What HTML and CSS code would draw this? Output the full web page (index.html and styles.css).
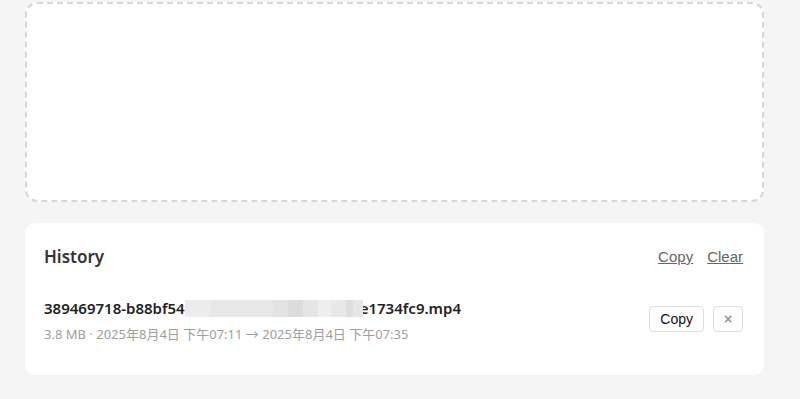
FILE: index.html
```html
<!DOCTYPE html>
<html lang="en">
<head>
<meta charset="utf-8">
<title>History</title>
<link rel="stylesheet" href="styles.css">
</head>
<body>
  <main class="page">
    <div class="dropzone"></div>
    <section class="history">
      <header class="history-head">
        <h2 class="history-title">History</h2>
        <div class="history-actions">
          <a class="link" href="#">Copy</a>
          <a class="link" href="#">Clear</a>
        </div>
      </header>
      <div class="item">
        <div class="item-info">
          <div class="item-name">389469718-b88bf54<span class="redact"></span>e1734fc9.mp4</div>
          <div class="item-meta">3.8 MB · 2025年8月4日 下午07:11 → 2025年8月4日 下午07:35</div>
        </div>
        <div class="item-buttons">
          <button class="btn">Copy</button>
          <button class="btn btn-x">×</button>
        </div>
      </div>
    </section>
  </main>
</body>
</html>
```
FILE: styles.css
```css
* { box-sizing: border-box; }
html, body { margin: 0; }
body {
  background: #f5f5f5;
  font-family: "Noto Sans", "Noto Sans CJK SC", sans-serif;
  color: #222;
}
.page {
  padding: 2px 36px 0 25px;
}
.dropzone {
  height: 200px;
  background: #fff;
  border: 2px dashed #d6d6d6;
  border-radius: 12px;
}
.history {
  margin-top: 21px;
  background: #fff;
  border-radius: 10px;
  padding: 20px 21px 31px 19px;
}
.history-head {
  display: flex;
  align-items: center;
  justify-content: space-between;
  height: 28px;
}
.history-title {
  margin: 0;
  font-size: 17px;
  font-weight: 600;
  color: #333;
  line-height: 28px;
}
.history-actions {
  display: flex;
  gap: 14px;
  margin-top: -2px;
}
.link {
  font-family: "Liberation Sans", Arial, sans-serif;
  font-size: 15px;
  color: #666;
  text-decoration: underline;
}
.item {
  margin-top: 26px;
  display: flex;
  align-items: center;
  justify-content: space-between;
}
.item-name {
  font-size: 15px;
  font-weight: 600;
  line-height: 22px;
  color: #222;
  display: flex;
  align-items: center;
}
.redact {
  display: inline-block;
  width: 178px;
  height: 17px;
  margin-top: 1px;
  margin-right: -3px;
  position: relative;
  z-index: 1;
  background: linear-gradient(to right,
    #ececec 0, #ececec 26px,
    #e7e7e7 26px, #e7e7e7 88px,
    #e3e3e3 88px, #e3e3e3 103px,
    #dcdcdc 103px, #dcdcdc 118px,
    #e5e5e5 118px, #e5e5e5 133px,
    #eeeeee 133px, #eeeeee 146px,
    #e8e8e8 146px, #e8e8e8 161px,
    #dedede 161px, #dedede 168px,
    #e6e6e6 168px, #e6e6e6 178px);
}
.item-meta {
  margin-top: 5px;
  font-size: 13px;
  line-height: 20px;
  color: #a0a0a0;
}
.item-buttons {
  display: flex;
  gap: 9px;
  margin-top: -4px;
}
.btn {
  height: 26px;
  padding: 0 10px;
  background: #fff;
  border: 1px solid #dedede;
  border-radius: 4px;
  font-family: "Liberation Sans", Arial, sans-serif;
  font-size: 14px;
  color: #111;
}
.btn-x {
  width: 30px;
  padding: 0;
  color: #999;
  font-size: 14px;
  font-weight: 700;
}
```
